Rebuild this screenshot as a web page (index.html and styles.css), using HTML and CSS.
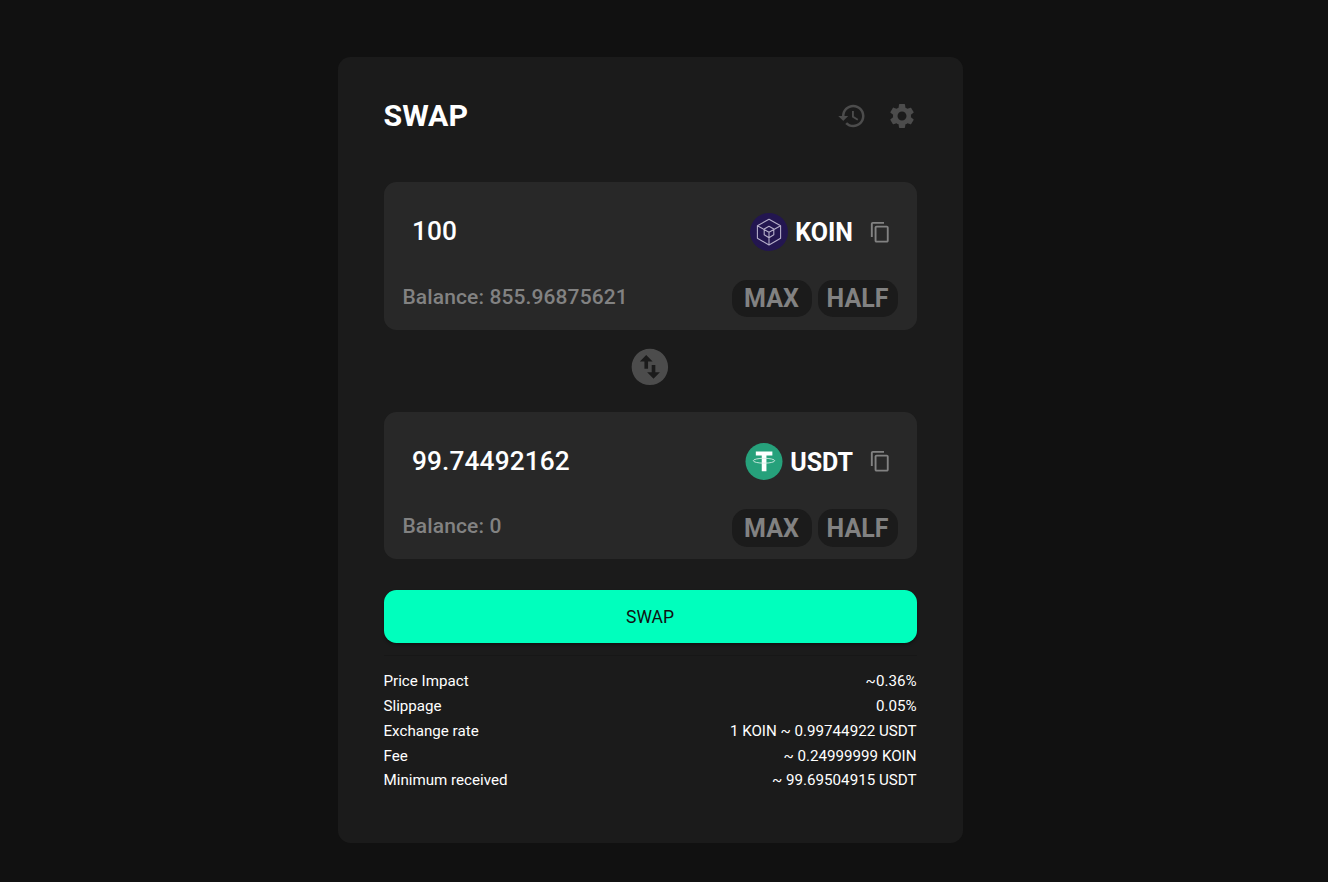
FILE: index.html
```html
<!DOCTYPE html>
<html lang="en">
<head>
<meta charset="utf-8">
<title>Swap</title>
<link rel="stylesheet" href="styles.css">
</head>
<body>
<main class="card">
  <header class="card-header">
    <h1 class="title">SWAP</h1>
    <div class="actions">
      <svg class="action-icon" viewBox="0 0 24 24"><path d="M13 3c-4.97 0-9 4.03-9 9H1l3.89 3.89.07.14L9 12H6c0-3.87 3.13-7 7-7s7 3.13 7 7-3.13 7-7 7c-1.93 0-3.68-.79-4.94-2.06l-1.42 1.42C8.27 19.99 10.51 21 13 21c4.97 0 9-4.03 9-9s-4.03-9-9-9zm-1 5v5l4.28 2.54.72-1.21-3.5-2.08V8H12z"/></svg>
      <svg class="action-icon" viewBox="0 0 24 24"><path d="M19.14 12.94c.04-.3.06-.61.06-.94 0-.32-.02-.64-.07-.94l2.03-1.58c.18-.14.23-.41.12-.61l-1.92-3.32c-.12-.22-.37-.29-.59-.22l-2.39.96c-.5-.38-1.03-.7-1.62-.94l-.36-2.54c-.04-.24-.24-.41-.48-.41h-3.84c-.24 0-.43.17-.47.41l-.36 2.54c-.59.24-1.13.57-1.62.94l-2.39-.96c-.22-.08-.47 0-.59.22L2.74 8.87c-.12.21-.08.47.12.61l2.03 1.58c-.05.3-.09.63-.09.94s.02.64.07.94l-2.03 1.58c-.18.14-.23.41-.12.61l1.92 3.32c.12.22.37.29.59.22l2.39-.96c.5.38 1.03.7 1.62.94l.36 2.54c.05.24.24.41.48.41h3.84c.24 0 .44-.17.47-.41l.36-2.54c.59-.24 1.13-.56 1.62-.94l2.39.96c.22.08.47 0 .59-.22l1.92-3.32c.12-.22.07-.47-.12-.61l-2.01-1.58zM12 15.6c-1.98 0-3.6-1.62-3.6-3.6s1.62-3.6 3.6-3.6 3.6 1.62 3.6 3.6-1.62 3.6-3.6 3.6z"/></svg>
    </div>
  </header>

  <section class="panel panel-from">
    <div class="panel-row">
      <div class="amount">100</div>
      <div class="token">
        <svg class="logo" viewBox="0 0 38 38">
          <circle class="koin-bg" cx="19" cy="19" r="19"/>
          <path class="koin-line" d="M19 6.200 30.600 12.800v12.500L19 32 7.400 25.300V12.800zM7.400 12.800 19 19.200 30.600 12.800M19 19.200V32M19 13.300l4.800 2.800v5.700l-4.800 2.900-4.800-2.900v-5.700z"/>
        </svg>
        <span class="symbol">KOIN</span>
        <svg class="copy" viewBox="0 0 24 24"><path d="M16 1H4c-1.100 0-2 .9-2 2v14h2V3h12V1zm3 4H8c-1.100 0-2 .9-2 2v14c0 1.100.9 2 2 2h11c1.100 0 2-.9 2-2V7c0-1.100-.9-2-2-2zm0 16H8V7h11v14z"/></svg>
      </div>
    </div>
    <div class="panel-row panel-foot">
      <div class="balance">Balance: 855.96875621</div>
      <div class="pills"><button class="pill">MAX</button><button class="pill">HALF</button></div>
    </div>
  </section>

  <div class="flip">
    <svg class="flip-icon" viewBox="0 0 24 24"><path d="M12 2C6.480 2 2 6.480 2 12s4.480 10 10 10 10-4.480 10-10S17.520 2 12 2zM6.500 9L10 5.500 13.500 9H11v4H9V9H6.500zm11 6L14 18.500 10.500 15H13v-4h2v4h2.500z"/></svg>
  </div>

  <section class="panel panel-to">
    <div class="panel-row">
      <div class="amount">99.74492162</div>
      <div class="token">
        <svg class="logo" viewBox="0 0 38 38">
          <circle class="usdt-bg" cx="19" cy="19" r="19"/>
          <path class="usdt-t" d="M10.600 8.700h17v4.200h-6.100v16.200h-4.800V12.900h-6.100z"/>
          <ellipse class="usdt-ring" cx="19" cy="18.200" rx="11" ry="2.500"/>
        </svg>
        <span class="symbol">USDT</span>
        <svg class="copy" viewBox="0 0 24 24"><path d="M16 1H4c-1.100 0-2 .9-2 2v14h2V3h12V1zm3 4H8c-1.100 0-2 .9-2 2v14c0 1.100.9 2 2 2h11c1.100 0 2-.9 2-2V7c0-1.100-.9-2-2-2zm0 16H8V7h11v14z"/></svg>
      </div>
    </div>
    <div class="panel-row panel-foot">
      <div class="balance">Balance: 0</div>
      <div class="pills"><button class="pill">MAX</button><button class="pill">HALF</button></div>
    </div>
  </section>

  <button class="submit">SWAP</button>
  <hr class="divider">

  <dl class="details">
    <div class="detail"><dt>Price Impact</dt><dd>~0.36%</dd></div>
    <div class="detail"><dt>Slippage</dt><dd>0.05%</dd></div>
    <div class="detail"><dt>Exchange rate</dt><dd>1 KOIN ~ 0.99744922 USDT</dd></div>
    <div class="detail"><dt>Fee</dt><dd>~ 0.24999999 KOIN</dd></div>
    <div class="detail"><dt>Minimum received</dt><dd>~ 99.69504915 USDT</dd></div>
  </dl>
</main>
</body>
</html>
```
FILE: styles.css
```css
* { box-sizing: border-box; }

body {
  margin: 0;
  padding: 57px 0 0 337.500px;
  height: 882px;
  overflow: hidden;
  background: #111;
  color: #fff;
  font-family: Roboto, "Liberation Sans", sans-serif;
}

button { border: 0; font-family: inherit; }

.card {
  display: flex;
  flex-direction: column;
  width: 625px;
  height: 785.500px;
  padding: 39px 46px 0;
  border-radius: 12.500px;
  background: #1b1b1b;
}

.card-header {
  display: flex;
  justify-content: space-between;
  height: 86px;
}

.title {
  margin: 0;
  font-size: 30.300px;
  line-height: 39.500px;
  font-weight: 700;
}

.actions { display: flex; gap: 20px; padding-top: 5px; }
.action-icon { width: 30px; height: 30px; fill: #4c4c4c; }

.panel {
  width: 533px;
  padding: 31px 19px 0 19px;
  border-radius: 12.500px;
  background: #282828;
}
.panel-from { height: 148px; }
.panel-to { height: 147px; }

.panel-row { display: flex; justify-content: space-between; }
.panel-foot { padding-top: 29px; }

.amount {
  padding-left: 9.500px;
  font-size: 26.250px;
  line-height: 36px;
  font-weight: 500;
  letter-spacing: 0.130px;
}

.token { display: flex; align-items: center; padding-right: 6.500px; }
.logo { width: 38px; height: 38px; margin-right: 7px; }
.symbol { font-size: 25px; height: 38px; line-height: 40px; font-weight: 700; }
.copy { width: 22.500px; height: 22.500px; margin-left: 15.500px; fill: #828282; }

.koin-bg { fill: #231650; }
.koin-line { fill: none; stroke: #b5aec9; stroke-width: 1.100; stroke-linejoin: round; }
.usdt-bg { fill: #26a17b; }
.usdt-t { fill: #fff; }
.usdt-ring { fill: none; stroke: #d5eee6; stroke-width: 0.900; }

.balance {
  font-size: 21px;
  line-height: 34px;
  font-weight: 500;
  color: #828282;
  letter-spacing: 0.110px;
}

.pills { display: flex; gap: 6px; }
.pill {
  width: 80px;
  height: 37px;
  padding: 0;
  border-radius: 15px;
  background: #1b1b1b;
  color: #828282;
  font-size: 25px;
  line-height: 38px;
  font-weight: 700;
}

.panel-to .logo { height: 37px; }
.panel-to .token { height: 37px; }
.panel-to .symbol { height: 37px; }
.panel-to .pill { height: 38px; padding-top: 1px; }

.flip {
  display: flex;
  justify-content: center;
  height: 82px;
  padding: 15px 1px 0 0;
}
.flip-icon { width: 43.750px; height: 43.750px; fill: #4c4c4c; }

.submit {
  width: 533px;
  height: 53px;
  margin-top: 31px;
  border-radius: 12.500px;
  background: #00ffbd;
  box-shadow: 0 2px 3px rgba(0, 0, 0, 0.350);
  color: #111;
  font-size: 17.500px;
  font-weight: 400;
}

.divider {
  width: 533px;
  height: 1px;
  margin: 12px 0 0;
  border: 0;
  background: #171717;
}

.details { margin: 13.300px 0 0; }
.detail {
  display: flex;
  justify-content: space-between;
  height: 24.800px;
  font-size: 15.150px;
  line-height: 25px;
}
.detail dd { margin: 0; }
```
